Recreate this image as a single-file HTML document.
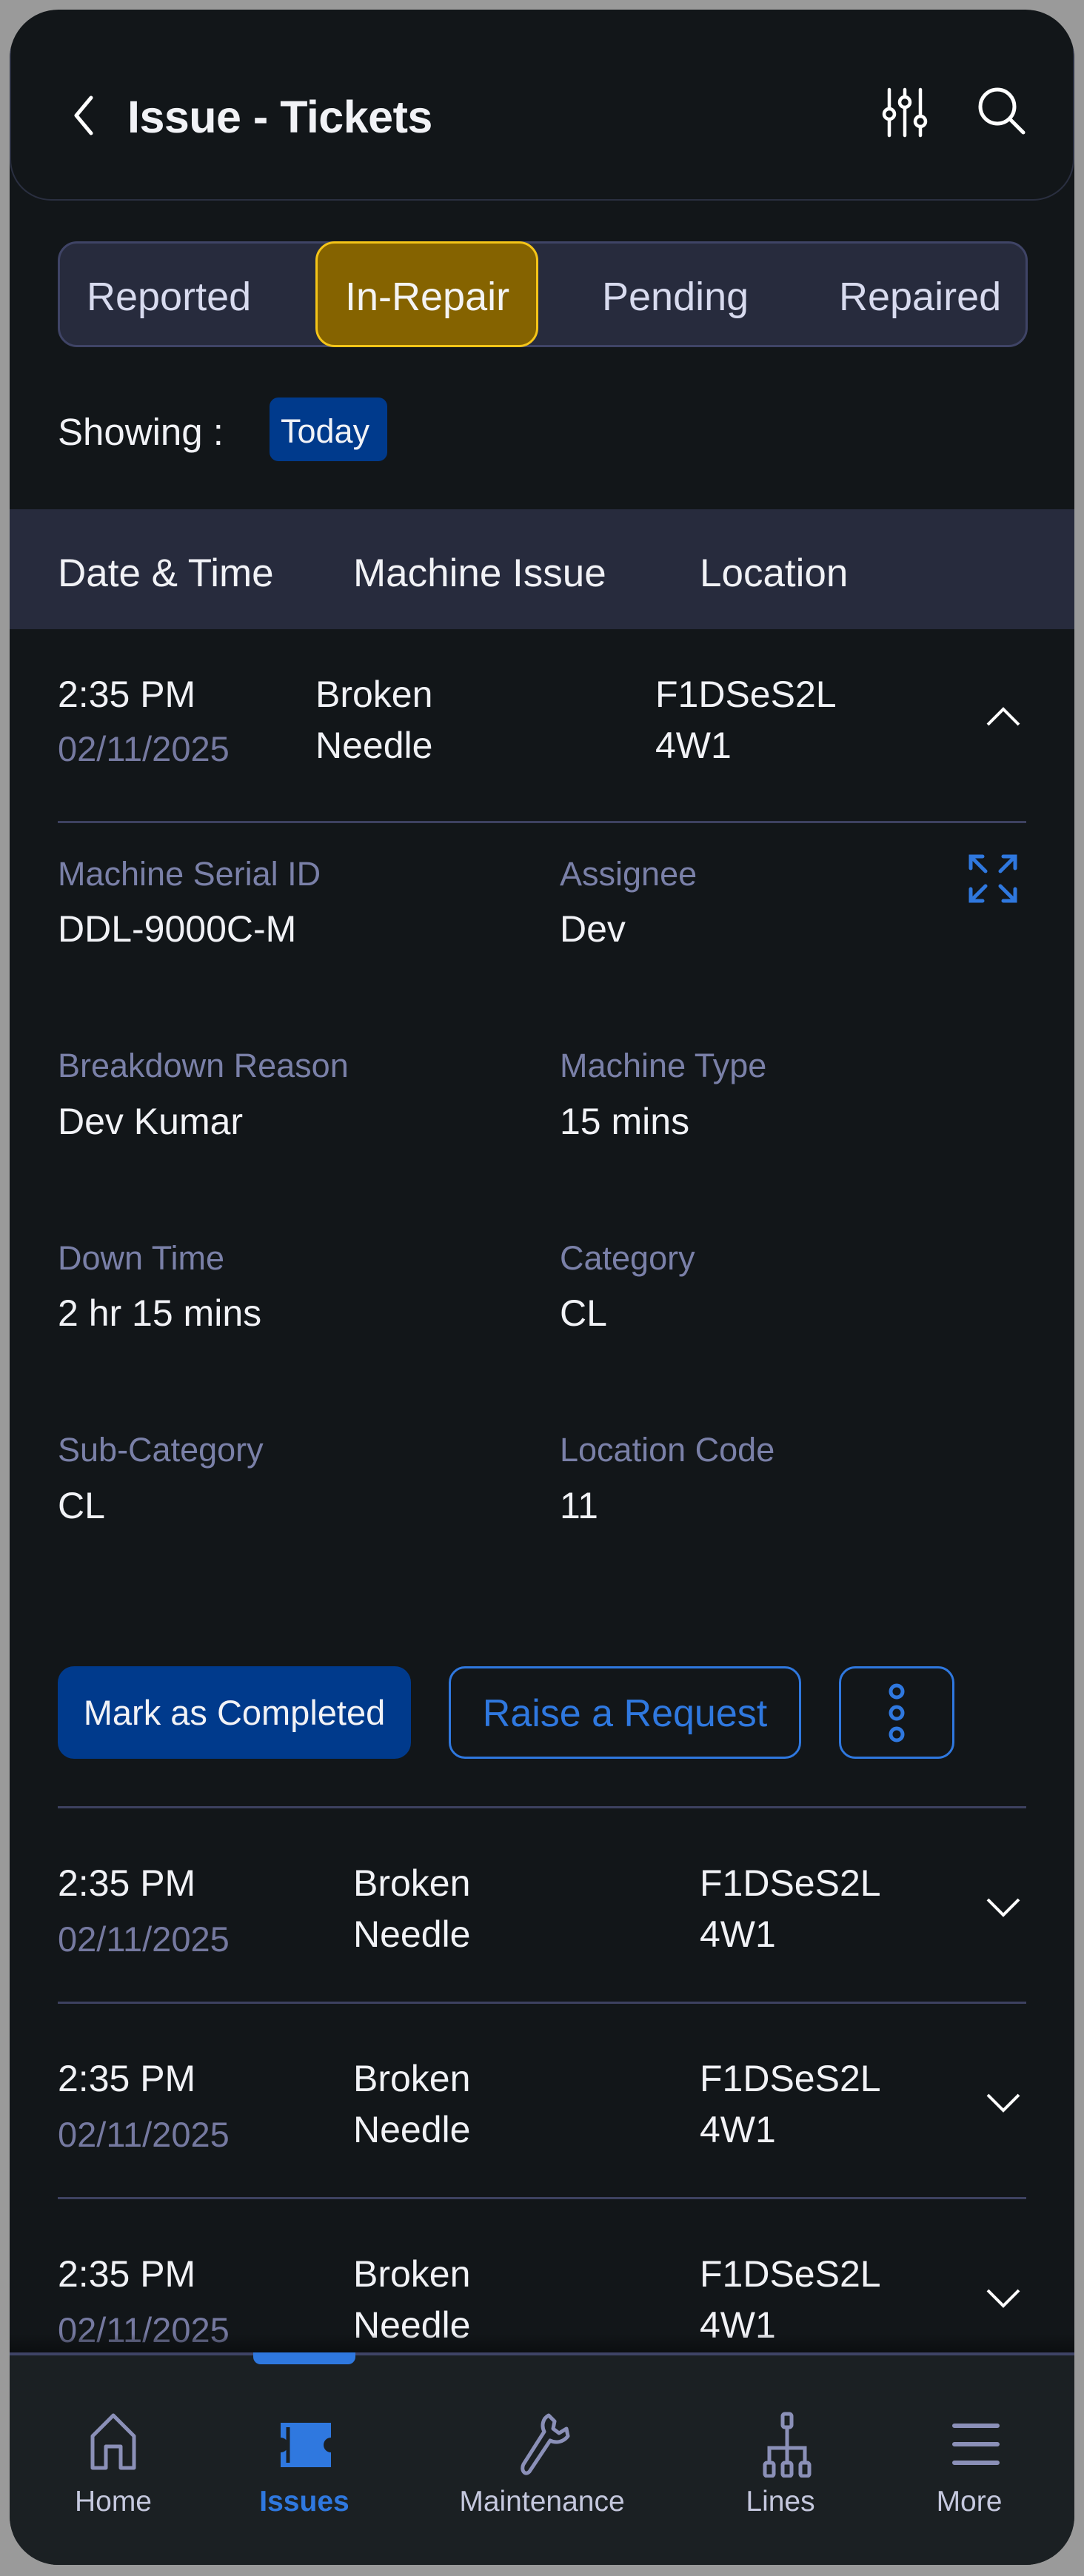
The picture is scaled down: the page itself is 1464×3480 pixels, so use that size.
<!DOCTYPE html>
<html><head><meta charset="utf-8"><style>
*{margin:0;padding:0;box-sizing:border-box}
body{width:1464px;height:3480px;background:#9a9a9a;font-family:"Liberation Sans",sans-serif;position:relative;overflow:hidden}
#f{position:absolute;left:13px;top:13px;width:1438px;height:3452px;background:#121619;border-radius:66px;overflow:hidden}
.t{position:absolute;white-space:nowrap;color:#f1f2f6}
.hd{position:absolute;left:0;top:0;width:1438px;height:258px;border:2px solid #2a2f40;border-top:none;border-radius:0 0 56px 56px}
.lab{color:#7a80a8;font-size:45px}
.val{font-size:50px}
.dv{position:absolute;left:65px;width:1308px;height:3px;background:#3d4160}
.dt{color:#7579a0;font-size:47px}
</style></head><body>
<div id="f">
<div class="hd"></div>
<svg style="position:absolute;left:80px;top:113px" width="40" height="60" viewBox="0 0 40 60"><path d="M30 6 L10 30 L30 54" stroke="#fff" stroke-width="5" fill="none" stroke-linecap="round" stroke-linejoin="round"/></svg>
<div class="t" style="left:159px;top:110px;font-size:61px;font-weight:bold;letter-spacing:-0.5px">Issue - Tickets</div>
<svg style="position:absolute;left:1174px;top:98px" width="70" height="80" viewBox="0 0 70 80" fill="none" stroke="#fff" stroke-width="4.5" stroke-linecap="round"><path d="M14 10V36M14 50V72M35 10V20M35 34V72M56 10V46M56 60V72"/><circle cx="14" cy="43" r="7"/><circle cx="35" cy="27" r="7"/><circle cx="56" cy="53" r="7"/></svg>
<svg style="position:absolute;left:1301px;top:98px" width="80" height="80" viewBox="0 0 80 80" fill="none" stroke="#fff" stroke-width="5" stroke-linecap="round"><circle cx="33" cy="33" r="23"/><path d="M50 50L68 68"/></svg>

<div style="position:absolute;left:65px;top:313px;width:1310px;height:143px;background:#272b3d;border:3px solid #3f4466;border-radius:26px"></div>
<div style="position:absolute;left:413px;top:313px;width:301px;height:143px;background:#856300;border:3px solid #f5c518;border-radius:26px"></div>
<div class="t" style="left:104px;top:357px;font-size:54px;color:#d8dbef">Reported</div>
<div class="t" style="left:453px;top:357px;font-size:54px;color:#f4f4f4">In-Repair</div>
<div class="t" style="left:800px;top:357px;font-size:54px;color:#d8dbef">Pending</div>
<div class="t" style="left:1120px;top:357px;font-size:54px;color:#d8dbef">Repaired</div>

<div class="t" style="left:65px;top:541px;font-size:51px">Showing :</div>
<div style="position:absolute;left:351px;top:524px;width:159px;height:86px;background:#003a8c;border-radius:12px"></div>
<div class="t" style="left:366px;top:544px;font-size:45px">Today</div>

<div style="position:absolute;left:0;top:675px;width:1438px;height:162px;background:#272b3d"></div>
<div class="t" style="left:65px;top:731px;font-size:53px">Date &amp; Time</div>
<div class="t" style="left:464px;top:731px;font-size:53px">Machine Issue</div>
<div class="t" style="left:932px;top:731px;font-size:53px">Location</div>

<div class="t val" style="left:65px;top:896px">2:35 PM</div>
<div class="t dt" style="left:65px;top:971px">02/11/2025</div>
<div class="t val" style="left:413px;top:896px">Broken</div>
<div class="t val" style="left:413px;top:965px">Needle</div>
<div class="t val" style="left:872px;top:896px">F1DSeS2L</div>
<div class="t val" style="left:872px;top:965px">4W1</div>
<svg style="position:absolute;left:1317px;top:940px" width="50" height="30" viewBox="0 0 50 30"><path d="M4 26L25 5L46 26" stroke="#fff" stroke-width="4" fill="none"/></svg>
<div class="dv" style="top:1096px"></div>

<svg style="position:absolute;left:1294px;top:1140px" width="68" height="68" viewBox="0 0 68 68" fill="none" stroke="#2f78df" stroke-width="5" stroke-linecap="round"><path d="M4 20V4H20M4 4L24 24M48 4H64V20M64 4L44 24M4 48V64H20M4 64L24 44M48 64H64V48M64 64L44 44"/></svg>

<div class="t lab" style="left:65px;top:1142px">Machine Serial ID</div>
<div class="t val" style="left:65px;top:1213px">DDL-9000C-M</div>
<div class="t lab" style="left:743px;top:1142px">Assignee</div>
<div class="t val" style="left:743px;top:1213px">Dev</div>
<div class="t lab" style="left:65px;top:1401px">Breakdown Reason</div>
<div class="t val" style="left:65px;top:1473px">Dev Kumar</div>
<div class="t lab" style="left:743px;top:1401px">Machine Type</div>
<div class="t val" style="left:743px;top:1473px">15 mins</div>
<div class="t lab" style="left:65px;top:1661px">Down Time</div>
<div class="t val" style="left:65px;top:1732px">2 hr 15 mins</div>
<div class="t lab" style="left:743px;top:1661px">Category</div>
<div class="t val" style="left:743px;top:1732px">CL</div>
<div class="t lab" style="left:65px;top:1920px">Sub-Category</div>
<div class="t val" style="left:65px;top:1992px">CL</div>
<div class="t lab" style="left:743px;top:1920px">Location Code</div>
<div class="t val" style="left:743px;top:1992px">11</div>

<div style="position:absolute;left:65px;top:2238px;width:477px;height:125px;background:#003a8c;border-radius:22px"></div>
<div class="t" style="left:65px;top:2273px;width:477px;text-align:center;font-size:47px">Mark as Completed</div>
<div style="position:absolute;left:593px;top:2238px;width:476px;height:125px;border:3px solid #2f78df;border-radius:22px"></div>
<div class="t" style="left:593px;top:2272px;width:476px;text-align:center;font-size:52px;color:#2f78df">Raise a Request</div>
<div style="position:absolute;left:1120px;top:2238px;width:156px;height:125px;border:3px solid #2f78df;border-radius:22px"></div>
<svg style="position:absolute;left:1183px;top:2260px" width="30" height="82" viewBox="0 0 30 82" fill="none" stroke="#2f78df" stroke-width="5"><circle cx="15" cy="12" r="8"/><circle cx="15" cy="41" r="8"/><circle cx="15" cy="70" r="8"/></svg>
<div class="dv" style="top:2427px"></div>

<div class="t val" style="left:65px;top:2502px">2:35 PM</div>
<div class="t dt" style="left:65px;top:2579px">02/11/2025</div>
<div class="t val" style="left:464px;top:2502px">Broken</div>
<div class="t val" style="left:464px;top:2571px">Needle</div>
<div class="t val" style="left:932px;top:2502px">F1DSeS2L</div>
<div class="t val" style="left:932px;top:2571px">4W1</div>
<svg style="position:absolute;left:1317px;top:2548px" width="50" height="30" viewBox="0 0 50 30"><path d="M4 5L25 26L46 5" stroke="#fff" stroke-width="4" fill="none"/></svg>
<div class="dv" style="top:2691px"></div>

<div class="t val" style="left:65px;top:2766px">2:35 PM</div>
<div class="t dt" style="left:65px;top:2843px">02/11/2025</div>
<div class="t val" style="left:464px;top:2766px">Broken</div>
<div class="t val" style="left:464px;top:2835px">Needle</div>
<div class="t val" style="left:932px;top:2766px">F1DSeS2L</div>
<div class="t val" style="left:932px;top:2835px">4W1</div>
<svg style="position:absolute;left:1317px;top:2812px" width="50" height="30" viewBox="0 0 50 30"><path d="M4 5L25 26L46 5" stroke="#fff" stroke-width="4" fill="none"/></svg>
<div class="dv" style="top:2955px"></div>

<div class="t val" style="left:65px;top:3030px">2:35 PM</div>
<div class="t dt" style="left:65px;top:3107px">02/11/2025</div>
<div class="t val" style="left:464px;top:3030px">Broken</div>
<div class="t val" style="left:464px;top:3099px">Needle</div>
<div class="t val" style="left:932px;top:3030px">F1DSeS2L</div>
<div class="t val" style="left:932px;top:3099px">4W1</div>
<svg style="position:absolute;left:1317px;top:3076px" width="50" height="30" viewBox="0 0 50 30"><path d="M4 5L25 26L46 5" stroke="#fff" stroke-width="4" fill="none"/></svg>

<div style="position:absolute;left:0;top:3140px;width:1438px;height:25px;background:linear-gradient(rgba(18,22,25,0),rgba(10,12,14,.8))"></div>
<div style="position:absolute;left:0;top:3165px;width:1438px;height:300px;background:#1b2023;border-top:4px solid #3f4466"></div>
<div style="position:absolute;left:329px;top:3165px;width:138px;height:16px;background:#2f78df;border-radius:0 0 10px 10px"></div>

<svg style="position:absolute;left:108px;top:3246px" width="64" height="80" viewBox="0 0 64 80" fill="none" stroke="#8b90b8" stroke-width="5" stroke-linejoin="round"><path d="M4 75V32L32 4L60 32V75H42V46H22V75Z"/></svg>
<svg style="position:absolute;left:362px;top:3256px" width="76" height="68" viewBox="0 0 76 68"><path d="M4 4H72V24A10 10 0 0 0 72 44V64H4V44A10 10 0 0 0 4 24Z" fill="#2f78df"/><path d="M14 10V58" stroke="#1b2023" stroke-width="5"/></svg>
<svg style="position:absolute;left:684px;top:3246px" width="80" height="90" viewBox="0 0 80 90" fill="none" stroke="#8b90b8" stroke-width="5" stroke-linecap="round" stroke-linejoin="round"><path d="M44 4C36 8 34 18 38 26L10 70C6 78 12 86 18 80L46 38C54 42 64 40 70 32L68 22L58 28L50 22L52 12Z"/></svg>
<svg style="position:absolute;left:1012px;top:3244px" width="76" height="90" viewBox="0 0 76 90" fill="none" stroke="#8b90b8" stroke-width="5"><rect x="32" y="4" width="12" height="18" rx="3"/><path d="M38 22V50M14 70V50H62V70M38 50V70"/><rect x="8" y="70" width="12" height="18" rx="3"/><rect x="32" y="70" width="12" height="18" rx="3"/><rect x="56" y="70" width="12" height="18" rx="3"/></svg>
<svg style="position:absolute;left:1272px;top:3258px" width="66" height="62" viewBox="0 0 66 62" fill="none" stroke="#8b90b8" stroke-width="6" stroke-linecap="round"><path d="M4 6H62M4 31H62M4 56H62"/></svg>

<div class="t" style="left:40px;top:3345px;width:200px;text-align:center;font-size:39px;color:#c5c8de">Home</div>
<div class="t" style="left:298px;top:3345px;width:200px;text-align:center;font-size:39px;color:#2f78df;font-weight:bold">Issues</div>
<div class="t" style="left:569px;top:3345px;width:300px;text-align:center;font-size:39px;color:#c5c8de">Maintenance</div>
<div class="t" style="left:941px;top:3345px;width:200px;text-align:center;font-size:39px;color:#c5c8de">Lines</div>
<div class="t" style="left:1196px;top:3345px;width:200px;text-align:center;font-size:39px;color:#c5c8de">More</div>
</div>
</body></html>
